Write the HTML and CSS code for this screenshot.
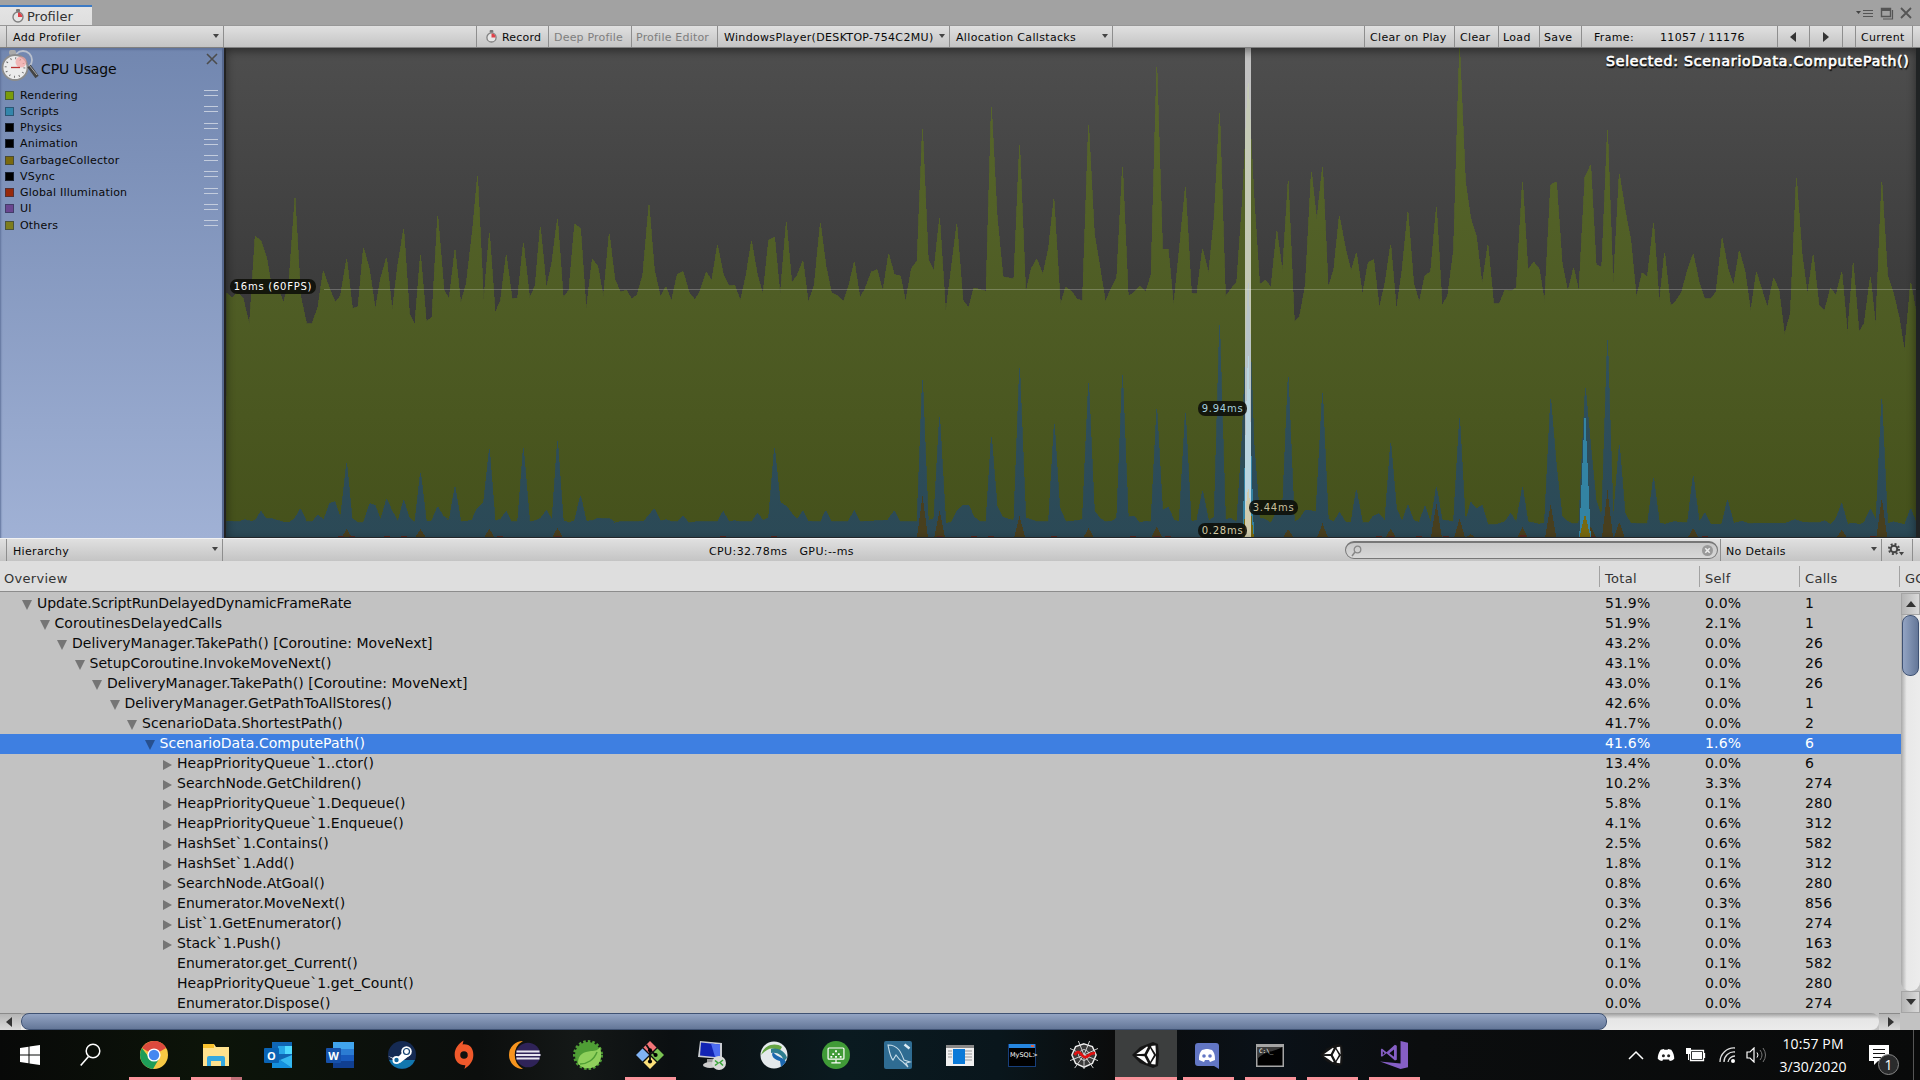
FILE: index.html
```html
<!DOCTYPE html>
<html lang="en">
<head>
<meta charset="utf-8">
<title>Profiler</title>
<link rel="stylesheet" href="styles.css">
</head>
<body>
<svg width="0" height="0" class="defs">
  <defs>
    <symbol id="watch" viewBox="0 0 12 14"><rect x="4" y="0" width="4" height="3" rx="1" fill="#777"/><circle cx="6" cy="8" r="5" fill="#e6e6e6" stroke="#808080" stroke-width="1.4"/><path d="M6 8V3.6A4.4 4.4 0 0 1 10.4 8z" fill="#e0424a"/></symbol>
    <symbol id="unity" viewBox="0 0 28 28"><path d="M0 14 8 6 21 1l5 2 1 11-1 11-5 2-13-5z" fill="#151515"/><path d="M4 13.300 15 5.500l1 .5-3.500 6.800zM4 14.800l8.500.4L16 22l-1 .6zM18.500 5l5-.5.500 9-5.500-8.500zM14 14l3.800-7.500L22 14l-4.200 7.500zM24 14.500l-.5 9-5-.5z" fill="#fff"/><path d="M4 14h10M14 14l5-9.500M14 14l5 9.500" stroke="#151515" stroke-width="1.500"/></symbol>
    <symbol id="discord" viewBox="0 0 24 18"><path d="M5 2 9 1l1 1h4l1-1 4 1c3 4 4 8 4 12-2 2-4 3-6 3l-1-2H8l-1 2c-2 0-4-1-6-3 0-4 1-8 4-12z" fill="#fff"/></symbol>
  </defs>
</svg>

<div class="titlebar">
  <div class="tab"><svg class="tab-icon"><use href="#watch"/></svg><span>Profiler</span></div>
  <svg class="window-buttons" viewBox="0 0 60 16"><path d="M0 6h5l-2.500 3z" fill="#444"/><path d="M7 5.500h10M7 8.500h10M7 11.500h10" stroke="#555" fill="none"/><path d="M25.500 3.500h9v8h-9z" fill="none" stroke="#555" stroke-width="1.4"/><path d="M25 3h10v3H25z" fill="#555"/><path d="M27 14h9.500V5" fill="none" stroke="#555" stroke-width="1.2"/><path d="M45 3l10 10M55 3 45 13" stroke="#555" stroke-width="1.8"/></svg>
</div>

<div class="toolbar top-tools">
  <div class="tool w-lead"></div>
  <div class="tool w-add">Add Profiler<i class="caret"></i></div>
  <div class="tool w-gap1"></div>
  <div class="tool w-record"><svg class="rec-icon"><use href="#watch"/></svg><span>Record</span></div>
  <div class="tool w-deep off">Deep Profile</div>
  <div class="tool w-editor off">Profile Editor</div>
  <div class="tool w-player">WindowsPlayer(DESKTOP-754C2MU)<i class="caret"></i></div>
  <div class="tool w-alloc">Allocation Callstacks<i class="caret"></i></div>
  <div class="tool w-gap2"></div>
  <div class="tool w-cop">Clear on Play</div>
  <div class="tool w-clear">Clear</div>
  <div class="tool w-load">Load</div>
  <div class="tool w-save">Save</div>
  <div class="tool w-frame"><span>Frame:</span><span>11057 / 11176</span></div>
  <div class="tool w-prev"><svg width="6" height="10"><path d="M6 0v10L0 5z" fill="#333"/></svg></div>
  <div class="tool w-next"><svg width="6" height="10"><path d="M0 0v10l6-5z" fill="#333"/></svg></div>
  <div class="tool w-gap3"></div>
  <div class="tool w-current">Current</div>
</div>

<div class="profile">
  <div class="legend">
    <div class="legend-head">
      <svg class="cpu-icon" viewBox="0 0 38 34"><circle cx="22" cy="11" r="9" fill="none" stroke="#b9c0cd" stroke-width="1.800"/><rect x="8" y="1" width="7" height="5" rx="2" fill="#aaa"/><circle cx="14" cy="18.500" r="12.500" fill="#ececec" stroke="#8c8c8c" stroke-width="1.800"/><circle cx="14" cy="18.500" r="9.300" fill="none" stroke="#666" stroke-dasharray=".9 3.970" stroke-width="2"/><circle cx="20" cy="13" r="5.500" fill="#f3a3a3" opacity=".7"/><path d="M10 18.500h9" stroke="#b33" stroke-width="1.300"/><path d="M28 17 36 28" stroke="#444" stroke-width="4"/><path d="M28 16 36 26" stroke="#aaa"/></svg>
      <span>CPU Usage</span>
      <svg class="close" viewBox="0 0 12 12"><path d="M1 1l10 10M11 1 1 11" stroke="#4c4c4c" stroke-width="1.600"/></svg>
    </div>
    <div class="legend-list">
      <div class="key"><i class="sw c-render"></i>Rendering<b></b></div>
      <div class="key"><i class="sw c-script"></i>Scripts<b></b></div>
      <div class="key"><i class="sw c-none"></i>Physics<b></b></div>
      <div class="key"><i class="sw c-none"></i>Animation<b></b></div>
      <div class="key"><i class="sw c-gc"></i>GarbageCollector<b></b></div>
      <div class="key"><i class="sw c-none"></i>VSync<b></b></div>
      <div class="key"><i class="sw c-gi"></i>Global Illumination<b></b></div>
      <div class="key"><i class="sw c-ui"></i>UI<b></b></div>
      <div class="key"><i class="sw c-other"></i>Others<b></b></div>
    </div>
  </div>
  <div class="chart">
    <svg class="plot" viewBox="224 48 1696 490" preserveAspectRatio="none" shape-rendering="crispEdges">
      <defs>
        <linearGradient id="gGreen" gradientUnits="userSpaceOnUse" x1="0" y1="48" x2="0" y2="538"><stop offset="0" stop-color="#59682c"/><stop offset=".5" stop-color="#4f5d25"/><stop offset="1" stop-color="#45511b"/></linearGradient>
        <linearGradient id="gBlue" gradientUnits="userSpaceOnUse" x1="0" y1="300" x2="0" y2="538"><stop offset="0" stop-color="#31535f"/><stop offset="1" stop-color="#2b4956"/></linearGradient>
      </defs>
      <polygon id="rendering" fill="url(#gGreen)" stroke="url(#gGreen)" stroke-width=".8"/>
      <polygon id="scripts" fill="url(#gBlue)" stroke="url(#gBlue)" stroke-width=".8"/>
      <path id="garbage" fill="#483f1e"/>
      <path id="illumination" fill="#5a2a22"/>
      <path id="pathScripts" fill="#3383a3"/>
      <path id="pathGarbage" fill="#77690f"/>
      <path d="M324 289.500H1919" stroke="#fff" stroke-opacity=".23"/>
      <rect x="1245" y="48" width="6" height="490" fill="#fff" fill-opacity=".66"/>
    </svg>
    <div class="selected">Selected: ScenarioData.ComputePath()</div>
    <div class="pill p-fps">16ms (60FPS)</div>
    <div class="pill p-a">9.94ms</div>
    <div class="pill p-b">3.44ms</div>
    <div class="pill p-c">0.28ms</div>
  </div>
</div>

<div class="toolbar view-tools">
  <div class="tool w-lead"></div>
  <div class="tool w-hier">Hierarchy<i class="caret"></i></div>
  <div class="stats"><span>CPU:32.78ms</span><span>GPU:--ms</span></div>
  <div class="search"><svg width="12" height="12" viewBox="0 0 12 12"><circle cx="6.500" cy="4.500" r="3.300" fill="none" stroke="#888" stroke-width="1.300"/><path d="M4 7l-3 4" stroke="#888" stroke-width="1.500"/></svg><svg width="11" height="11" viewBox="0 0 11 11"><circle cx="5.500" cy="5.500" r="5.500" fill="#999"/><path d="M3.300 3.300l4.400 4.400M7.700 3.300 3.300 7.700" stroke="#eee" stroke-width="1.500"/></svg></div>
  <div class="tool w-details">No Details<i class="caret"></i></div>
  <div class="tool w-gear"><svg width="17" height="14" viewBox="0 0 17 14"><circle cx="6" cy="6" r="3.300" fill="none" stroke="#444" stroke-width="2"/><circle cx="6" cy="6" r="5" fill="none" stroke="#444" stroke-width="2" stroke-dasharray="1.960 1.960"/><path d="M11 9h5l-2.500 3.500z" fill="#444"/></svg></div>
</div>

<div class="table">
  <div class="thead"><span class="name">Overview</span><span>Total</span><span>Self</span><span>Calls</span><span class="gc">GC</span></div>
  <div class="tbody">
    <div class="rows" id="rows"></div>
    <div class="vbar"><div class="arrow up"></div><div class="vtrack"><div class="vthumb"></div></div><div class="arrow down"></div></div>
  </div>
  <div class="hbar"><div class="harrow left"></div><div class="htrack"><div class="hthumb"></div></div><div class="harrow right"></div><div class="corner"></div></div>
</div>

<div class="taskbar">
  <div class="slot start"><svg width="20" height="20" viewBox="0 0 20 20"><path d="M0 3l8.500-1.200v7.700H0zM9.500 1.600 20 0v9.500H9.500zM0 10.500h8.500v7.700L0 17zM9.500 10.500H20V20L9.500 18.400z" fill="#fff"/></svg></div>
  <div class="slot find"><svg width="21" height="24" viewBox="0 0 21 24"><circle cx="13" cy="8" r="6.800" fill="none" stroke="#fff" stroke-width="1.500"/><path d="M8.500 13.500 .7 22.500" stroke="#fff" stroke-width="1.600"/></svg></div>
  <div class="slot open"><svg viewBox="0 0 28 28"><circle cx="14" cy="14" r="14" fill="#f7c844"/><path d="M14 14 1.900 7A14 14 0 0 1 26.100 7z" fill="#dc4a3d"/><path d="M14 0A14 14 0 0 1 26.100 7H14z" fill="#dc4a3d"/><path d="M1.900 7A14 14 0 0 0 13 28l6.500-11L8 15z" fill="#1e9d58"/><circle cx="14" cy="14" r="6.600" fill="#fff"/><circle cx="14" cy="14" r="5.200" fill="#4688f1"/></svg></div>
  <div class="slot open multi"><svg viewBox="0 0 28 28"><path d="M1 3h11l2 3h13v19H1z" fill="#ffe28e"/><path d="M1 3h11v4H1z" fill="#f9c22e"/><path d="M5 25v-8q0-2 2-2h14q2 0 2 2v8h-4v-5H9v5z" fill="#35a8e0"/></svg></div>
  <div class="slot"><svg viewBox="0 0 28 28"><path d="M8 1h20v26H8z" fill="#1066b5"/><path d="M14 5h14v8H14z" fill="#28a8ea"/><path d="M21 5h7v8h-7z" fill="#50d9ff"/><path d="M8 14l20 13H8z" fill="#1490df"/><path d="M28 14v13L16 19z" fill="#35b8f1"/><rect y="7" width="15" height="15" rx="1" fill="#0a63b4"/><text x="7.500" y="18.500" class="badge-letter">O</text></svg></div>
  <div class="slot"><svg viewBox="0 0 28 28"><path d="M7 1h21v7H7z" fill="#41a5ee"/><path d="M7 8h21v7H7z" fill="#2b7cd3"/><path d="M7 14h21v7H7z" fill="#185abd"/><path d="M7 20h21v7H7z" fill="#103f91"/><rect y="7" width="15" height="15" rx="1" fill="#1651aa"/><text x="7.500" y="18.500" class="badge-letter">W</text></svg></div>
  <div class="slot"><svg viewBox="0 0 28 28"><circle cx="14" cy="14" r="14" fill="#152a52"/><path d="M1 19a14 14 0 0 0 26 0z" fill="#1277ae"/><path d="M0 15l8 3 6-6 7 3-9 7z" fill="#fff"/><circle cx="8.500" cy="19" r="4" fill="#fff"/><circle cx="8.500" cy="19" r="2.200" fill="#15659a"/><circle cx="18.500" cy="10.500" r="5.300" fill="#fff"/><circle cx="18.500" cy="10.500" r="3" fill="#fff" stroke="#123f70" stroke-width="1.200"/></svg></div>
  <div class="slot"><svg viewBox="0 0 28 30"><path d="M14 3.500c7 0 10 5 10 11.500 0 7-4 11-9.500 15l1-4C8 26 4 21 4 14.500 4 8 8 3 13.500-.5l-1 4.200z" fill="#f0592b"/><circle cx="14" cy="15" r="4" fill="#10110f"/></svg></div>
  <div class="slot"><svg viewBox="0 0 28 28"><path d="M11 0A14 14 0 0 0 11 28 16 16 0 0 1 11 0z" fill="#f7941e"/><circle cx="16" cy="14" r="12.300" fill="#2f2358"/><path d="M4.500 10.500h23M4 14h24.500M4.500 17.500h23" stroke="#e8e6f0" stroke-width="1.800"/></svg></div>
  <div class="slot"><svg viewBox="0 0 28 28"><circle cx="14" cy="14" r="13.500" fill="none" stroke="#4f9e35" stroke-width="3" stroke-dasharray="2.500 2"/><circle cx="14" cy="14" r="13" fill="#4f9e35"/><path d="M26 6c3 11 0 19-9 21-6 1-11-1-13-5 0-9 6-11 13-12 5 0 7-1 9-4z" fill="#8fd05c"/><path d="M6 23c7 0 14-4 17-12" stroke="#4f9e35" stroke-width="1.500" fill="none"/></svg></div>
  <div class="slot open"><svg viewBox="0 0 30 30"><path d="M15 0l7 7-7 7-7-7z" fill="#f37579"/><path d="M7 8l7 7-7 7-7-7z" fill="#80b3f5"/><path d="M23 8l7 7-7 7-7-7z" fill="#7bc353"/><path d="M15 16l7 7-7 7-7-7z" fill="#fce07a"/><path d="M11 4l4 6v12M15 10l6 5" stroke="#111" stroke-width="2" fill="none"/><circle cx="15" cy="10" r="2.200"/><circle cx="21" cy="15" r="2.200"/><circle cx="15" cy="22" r="2.200"/></svg></div>
  <div class="slot"><svg viewBox="0 0 28 28"><path d="M2 0l22 2v16L0 16z" fill="#c9ccd2"/><path d="M3 1.500l19 2v13L2 14.500z" fill="#1224b4"/><path d="M13 2.500l9 1v13l-5-.5z" fill="#4d6df0"/><path d="M9 18h7v5H9z" fill="#999"/><ellipse cx="12" cy="24" rx="7" ry="3" fill="#ccc"/><circle cx="21" cy="22" r="7" fill="#d8dad7"/><path d="M17 19.500l3 2.500-3 2.500M25 19l-3 2.500 3 3" stroke="#3aa53a" stroke-width="1.600" fill="none"/></svg></div>
  <div class="slot"><svg viewBox="0 0 28 28"><circle cx="14" cy="14" r="13.500" fill="#e5eaec"/><path d="M1 14C4 4 15 1 22 6l-3 5C14 5 7 7 1 14z" fill="#66a544"/><path d="M11 8c8-2 15 4 16 9l-3 3c-2-6-6-9-13-8z" fill="#2e7d8f"/><path d="M13 11c-3 4 2 8 7 9l1 6 5-5c-2-5-8-4-13-10z" fill="#1c68b0"/></svg></div>
  <div class="slot"><svg viewBox="0 0 30 30"><circle cx="15" cy="15" r="15" fill="#409b37"/><rect x="6.500" y="7.500" width="17" height="12" rx="1" fill="none" stroke="#fff" stroke-width="1.300"/><path d="M15 20v3M10 23.500h10" stroke="#fff" stroke-width="1.300"/><path d="M14 10h2v2h-2zM11 13h2v2h-2zM17 13h2v2h-2zM9 16h2v2H9zM14 16h2v2h-2zM19 16h2v2h-2z" fill="#fff"/></svg></div>
  <div class="slot"><svg viewBox="0 0 28 28"><rect width="28" height="28" rx="2" fill="#2f6c92"/><path d="M4 4c10 0 13 7 16 15l6 2-4 1 2 4-5-5c-2-1-5-4-7-7l-3 5C6 16 5 9 4 4z" fill="none" stroke="#c7dde9" stroke-width="1.100"/><path d="M20.500 3.500l5 4" stroke="#dcecf5" stroke-width="2.500"/></svg></div>
  <div class="slot"><svg viewBox="0 0 28 28"><path d="M0 4h28v21H0z" fill="#f0f0f0"/><path d="M0 4h28v3H0z" fill="#888"/><path d="M2 10h4M2 13h4M2 16h4M19 10h7M19 13h7M19 16h7M19 19h7" stroke="#999"/><path d="M7 8h12v15H7z" fill="#0b7ad8"/></svg></div>
  <div class="slot"><svg viewBox="0 0 28 28"><path d="M0 3h28v23H0z" fill="#173f7c"/><path d="M1 3h26v4H1z" fill="#2586e0"/><path d="M1 7h26v18H1z" fill="#000"/><path d="M23 4h3v2h-3z" fill="#e06040"/><text x="2" y="15.500" class="mysql-text">MySQL&gt;</text></svg></div>
  <div class="slot"><svg viewBox="0 0 30 30"><path d="M15 3l9 3 4 9-4 9-9 4-9-4-4-9 4-9z" fill="#3a3a3a" stroke="#eee" stroke-width="1.500"/><path d="M15 9l4 2 2 4-2 4-4 2-4-2-2-4 2-4z" fill="none" stroke="#ccc"/><path d="M9 0l6 15L21 0M0 8l15 7L30 8M0 21l15-6 15 6M5 29l10-14 10 14M15 15v15" stroke="#ddd" stroke-width="1" fill="none"/><path d="M5 15c4-7 7 0 10 2 4 2 5-5 12-4" stroke="#e01010" stroke-width="3" fill="none"/></svg></div>
  <div class="slot active"><svg><use href="#unity"/></svg></div>
  <div class="slot open"><svg viewBox="0 0 28 28"><path d="M4 2h18q3 0 3 3v23l-5-3H4q-3 0-3-3V5q0-3 3-3z" fill="#6276c4"/><path d="M8 9l4-1h2l4 1c3 3 3 7 3 10l-5 2-1-2h-4l-1 2-5-2c0-3 0-7 3-10z" fill="#fff"/><circle cx="10" cy="15" r="1.800" fill="#6276c4"/><circle cx="16" cy="15" r="1.800" fill="#6276c4"/></svg></div>
  <div class="slot open"><svg viewBox="0 0 28 28"><path d="M0 3h28v23H0z" fill="#a5a5a5"/><path d="M1.500 6h25v18.500h-25z"/><path d="M1.500 6h25C18 11 8 10 1.500 18z" fill="#3b3b3b"/><text x="3" y="12" class="cmd-text">C:\_</text></svg></div>
  <div class="slot open"><svg class="small"><use href="#unity" width="24" height="24"/></svg></div>
  <div class="slot open"><svg viewBox="0 0 30 30"><path d="M22 0l8 2v26l-8 2L0 22l22 2z" fill="#865fc5"/><path d="M2 8l5 4 9-8 2 1v15l-2 1-9-8-5 4-1-1V9zM3 11v4l2-2zM15 9l-5 4 5 4z" fill="#865fc5" fill-rule="evenodd"/></svg></div>
  <div class="tray">
    <svg class="t-up" viewBox="0 0 16 10"><path d="M1 9l7-7 7 7" stroke="#fff" stroke-width="1.500" fill="none"/></svg>
    <svg class="t-disc" viewBox="0 0 24 18"><use href="#discord" width="24" height="18"/><circle cx="8.500" cy="10" r="2" fill="#222"/><circle cx="15.500" cy="10" r="2" fill="#222"/></svg>
    <svg class="t-bat" viewBox="0 0 20 14"><path d="M4.500 2.500h13v10h-13zM18.500 5v5" stroke="#fff" fill="none" stroke-width="1.300"/><path d="M6 4h10v7H6z" fill="#fff"/><path d="M0 0h5v6H3v6H2V6H0z" fill="#fff"/></svg>
    <svg class="t-wifi" viewBox="0 0 17 16"><path d="M1 15A14 14 0 0 1 16 1M5 15A10 10 0 0 1 16 5M9 15A7 7 0 0 1 16 9" stroke="#ddd" fill="none" stroke-width="1.300"/><circle cx="14" cy="14" r="2" fill="#fff"/></svg>
    <svg class="t-vol" viewBox="0 0 20 16"><path d="M1 5h3l4-4v14l-4-4H1z" stroke="#fff" fill="none" stroke-width="1.200"/><path d="M11 5.500q2 2.500 0 5" stroke="#fff" fill="none"/><path d="M14 3q4 5 0 10M17 1q5 7 0 14" stroke="#777" fill="none"/></svg>
    <div class="clock"><span>10:57 PM</span><span>3/30/2020</span></div>
    <div class="note"><svg width="20" height="20" viewBox="0 0 20 20"><path d="M0 0h20v16H9l-4 4v-4H0z" fill="#fff"/><path d="M4 4.500h12M4 8.500h12M4 12.500h8" stroke="#111" stroke-width="1.200"/></svg><span class="count">1</span></div>
    <div class="desk"></div>
  </div>
</div>
<script src="chart.js"></script>
</body>
</html>
```
FILE: styles.css
```css
* { box-sizing: border-box; }
body { margin: 0; width: 1920px; height: 1080px; overflow: hidden; display: flex; flex-direction: column; background: #c2c2c2; font-family: "DejaVu Sans", sans-serif; font-size: 11px; color: #090909; }
.defs { position: absolute; }
svg { display: block; flex: none; }

.titlebar { height: 26px; flex: none; background: #a2a2a2; display: flex; justify-content: space-between; align-items: flex-end; border-bottom: 1px solid #979797; }
.tab { width: 92px; height: 20px; border-top: 2px solid #3c7ac4; background: linear-gradient(#e4e4e4, #dedede); display: flex; align-items: center; padding-left: 12px; gap: 3px; font-size: 13px; color: #333; }
.tab-icon { width: 12px; height: 14px; }
.window-buttons { width: 60px; height: 16px; margin: 0 4px 4px 0; }

.toolbar { display: flex; flex: none; background: linear-gradient(#e0e0e0, #c4c4c4); letter-spacing: .33px; }
.top-tools { height: 22px; border-bottom: 1px solid #808080; }
.view-tools { height: 23px; border-top: 1px solid #f2f2f2; }
.tool { display: flex; align-items: center; border-right: 1px solid #8e8e8e; white-space: nowrap; padding: 2px 0 0 6px; flex: none; }
.off { color: #7e7e7e; }
.caret { width: 0; height: 0; border: 3px solid transparent; border-top: 4px solid #444; border-bottom: 0; margin: 0 4px 4px auto; }
.w-lead { width: 7px; }
.w-add { width: 217px; }
.w-gap1 { width: 253px; }
.w-record { width: 72px; padding-left: 9px; gap: 5px; letter-spacing: .2px; }
.rec-icon { width: 11px; height: 13px; margin-bottom: 2px; }
.w-deep { width: 83px; padding-left: 5px; letter-spacing: .2px; }
.w-editor { width: 86px; padding-left: 4px; letter-spacing: .2px; }
.w-player { width: 232px; }
.w-alloc { width: 163px; }
.w-gap2 { width: 252px; }
.w-cop { width: 90px; padding-left: 5px; }
.w-clear { width: 44px; padding-left: 5px; }
.w-load { width: 41px; padding-left: 4px; }
.w-save { width: 42px; padding-left: 4px; }
.w-frame { width: 196px; padding-left: 12px; gap: 26px; }
.w-prev { width: 32px; padding: 0 0 0 12px; }
.w-next { width: 33px; padding: 0 0 0 13px; }
.w-gap3 { width: 13px; }
.w-current { width: 57px; padding-left: 5px; }

.profile { height: 490px; flex: none; display: flex; }
.legend { width: 224px; background: linear-gradient(#7287b0, #a0b1d5); border-right: 2px solid #56688e; box-shadow: inset 1px 2px 2px #5f739b; }
.legend-head { height: 39px; display: flex; align-items: flex-start; font-size: 14px; letter-spacing: -.1px; }
.cpu-icon { width: 38px; height: 34px; margin: 1px 0 0 1px; }
.legend-head span { margin: 13px 0 0 2px; }
.close { width: 12px; height: 12px; margin: 5px 4px 0 auto; }
.legend-list { display: grid; grid-template-rows: repeat(9, 16.25px); letter-spacing: .2px; }
.key { display: flex; align-items: center; padding: 0 4px 0 5px; }
.sw { width: 9px; height: 9px; border: 1px solid rgba(40, 55, 80, .6); margin-right: 6px; }
.key b { width: 14px; height: 6px; border-top: 1px solid #c3ccdd; border-bottom: 1px solid #c3ccdd; margin-left: auto; margin-bottom: 4px; }
.c-render { background: #7a9c0a; }
.c-script { background: #3386ab; }
.c-none { background: #000; }
.c-gc { background: #7a690d; }
.c-gi { background: #97290b; }
.c-ui { background: #6a4690; }
.c-other { background: #7d7d1d; }

.chart { flex: 1; position: relative; background: linear-gradient(#4e4e4e, #363636 65%); overflow: hidden; }
.plot { width: 1696px; height: 490px; }
.chart::after { content: ""; position: absolute; inset: 0; border-right: 4px solid #202324; border-bottom: 1px solid #22272a; border-left: 2px solid #222; box-shadow: inset 0 3px 10px rgba(0, 0, 0, .45); }
.selected { position: absolute; right: 9px; top: 5px; width: 305px; color: #fff; font-size: 14px; letter-spacing: .82px; white-space: nowrap; -webkit-text-stroke: .7px #fff; text-shadow: 1px 2px 1px #000, 0 1px 2px #000; z-index: 2; }
.pill { position: absolute; z-index: 2; height: 15px; border-radius: 7px; background: rgba(12, 14, 8, .88); font-size: 10px; line-height: 15px; letter-spacing: .75px; text-align: center; white-space: nowrap; }
.p-fps { left: 6px; top: 231px; width: 86px; color: #fff; }
.p-a { left: 974px; top: 353px; width: 49px; color: #a6cfdf; }
.p-b { left: 1025px; top: 452px; width: 49px; color: #c8bf9b; }
.p-c { left: 974px; top: 475px; width: 49px; color: #d4cba5; }

.w-hier { width: 216px; }
.stats { width: 1122px; display: flex; gap: 12px; align-items: center; padding: 2px 0 0 486px; flex: none; letter-spacing: .4px; }
.search { width: 373px; height: 18px; margin: 2px 2px 0 0; border: 1px solid #777; border-top-width: 2px; border-radius: 9px; background: linear-gradient(#c8c8c8, #d8d8d8); display: flex; align-items: center; justify-content: space-between; padding: 0 4px 0 5px; flex: none; }
.w-details { width: 162px; border-left: 1px solid #8e8e8e; padding-left: 5px; }
.w-gear { width: 31px; padding-top: 0; }

.table { flex: none; height: 469px; display: flex; flex-direction: column; font-size: 14px; }
.thead { height: 31px; flex: none; background: #dedede; border-bottom: 1px solid #8c8c8c; display: grid; grid-template-columns: 1599px 100px 100px 100px 21px; color: #333; padding: 5px 0 4px; overflow: hidden; font-size: 13px; letter-spacing: .3px; }
.thead span { border-left: 1px solid #a2a2a2; padding-left: 5px; height: 21px; line-height: 26px; }
.thead .name { border: 0; padding-left: 4px; }
.thead .gc { overflow: hidden; white-space: nowrap; }
.tbody { display: flex; height: 421px; flex: none; overflow: hidden; }
.rows { width: 1901px; padding-top: 2px; overflow: hidden; }
.row { height: 20px; display: grid; grid-template-columns: 1599px 100px 100px 102px; line-height: 18px; white-space: pre; letter-spacing: .2px; }
.row span { padding-left: 6px; }
.row .fn { display: flex; letter-spacing: .05px; padding-left: calc(22px + var(--depth) * 17.5px); }
.row:first-child .fn { letter-spacing: -.08px; }
.row svg { width: 10px; height: 10px; margin: 6px 5px 0 0; fill: #757575; }
.row.on { background: #3e7fe1; color: #fff; }
.row.on svg { fill: #27508f; }
.vbar { width: 19px; margin-top: 1px; display: flex; flex-direction: column; }
.arrow { height: 22px; background: linear-gradient(90deg, #b5b5b5, #dadada); border: 1px solid #a5a5a5; display: flex; justify-content: center; align-items: center; }
.arrow::before { content: ""; border: 5px solid transparent; }
.up::before { border-bottom: 6px solid #333; border-top: 0; }
.down::before { border-top: 6px solid #333; border-bottom: 0; }
.vtrack { flex: 1; background: linear-gradient(90deg, #a8a8a8, #e8e8e8 30%, #ececec); border-radius: 0 0 9px 9px; padding: 0 1px; }
.vthumb { height: 61px; border: 1px solid #3f5273; border-radius: 8px; background: linear-gradient(90deg, #93a4c3, #647798); }
.hbar { height: 17px; display: flex; }
.harrow { width: 21px; background: linear-gradient(#b5b5b5, #dadada); border-top: 1px solid #8a8a8a; display: flex; align-items: center; justify-content: center; flex: none; }
.harrow::before { content: ""; border: 5px solid transparent; }
.left::before { border-right: 6px solid #333; border-left: 0; margin-right: 4px; }
.right::before { border-left: 6px solid #333; border-right: 0; margin-left: 3px; }
.htrack { width: 1858px; background: linear-gradient(#999, #e6e6e6 35%, #ebebeb); border-radius: 0 8px 8px 0; flex: none; }
.hthumb { width: 1586px; height: 17px; border: 1px solid #3f5273; border-radius: 8px; background: linear-gradient(#93a4c3, #647798); }
.corner { flex: 1; background: #c2c2c2; }

.taskbar { height: 50px; flex: none; display: flex; background: linear-gradient(90deg, #080908, #0c1409 11%, #0c0e0d 25%, #141817 30%, #0b0f11 35%, #0a1a20 44%, #09161c 52%, #0b0c0c 58%, #0a1118 66%, #0b0d0e 74%, #090a0a); }
.slot { width: 62px; display: flex; align-items: center; justify-content: center; flex: none; position: relative; }
.slot svg { width: 28px; height: 28px; overflow: visible; }
.slot svg.small { width: 24px; height: 24px; }
.start { width: 60px; }
.start svg { width: 20px; height: 20px; }
.find { width: 61px; margin-right: 2px; }
.find svg { width: 21px; height: 24px; }
.open::after, .active::after { content: ""; position: absolute; left: 6px; right: 5px; bottom: 0; height: 3px; background: #fa939b; }
.multi::after { background: linear-gradient(90deg, #fa939b 40px, #c06f77 40px); }
.active { background: #3c3e3e; }
.active::after { left: 0; right: 0; }
.badge-letter { fill: #fff; font: bold 11px "Open Sans", sans-serif; text-anchor: middle; }
.mysql-text { fill: #fff; font: 6.5px "DejaVu Sans", sans-serif; }
.cmd-text { fill: #fff; font: 6px "DejaVu Sans Mono", monospace; }
.tray { margin-left: auto; display: flex; align-items: center; }
.t-up { width: 16px; height: 10px; margin-right: 13px; }
.t-disc { width: 18px; height: 14px; margin-right: 11px; }
.t-bat { width: 20px; height: 14px; margin-right: 13px; }
.t-wifi { width: 17px; height: 16px; margin-right: 10px; }
.t-vol { width: 20px; height: 16px; margin-right: 11px; }
.clock { width: 72px; color: #fff; font-family: "Open Sans", sans-serif; font-size: 14px; line-height: 23px; letter-spacing: .1px; display: flex; flex-direction: column; align-items: center; }
.note { width: 44px; margin-left: 20px; position: relative; height: 50px; padding-top: 15px; }
.count { position: absolute; left: 9px; top: 24px; width: 21px; height: 21px; border-radius: 50%; background: #2a2b2c; border: 1px solid #888; color: #fff; font: 14px/19px "Open Sans", sans-serif; text-align: center; }
.desk { width: 7px; height: 50px; border-left: 1px solid #555; }
```
FILE: chart.js
```js
// Samples come in three blocks, each with its own origin and horizontal scale.
const blocks = [
  { x: 220, y: 150, sx: 2.6133, sy: 3 },
  { x: 800, y: 50, sx: 2.8, sy: 3 },
  { x: 1360, y: 50, sx: 2.8, sy: 3 }
];
const place = (b, x, y) => [(b.x + x / b.sx).toFixed(1), (b.y + y / b.sy).toFixed(1)];

const rendering = [
  "18,430 33,444 45,425 60,445 77,525 92,258 107,273 122,325 133,400 152,415 166,458 180,400 196,145 211,440 226,521 241,521 256,470 270,363 286,415 301,457 315,437 331,327 346,476 361,470 375,294 390,355 406,480 420,385 435,323 450,484 465,345 480,237 495,490 509,525 524,315 539,516 554,500 569,197 585,420 599,447 614,299 629,461 644,400 660,240 673,78 689,458 704,248 719,488 733,453 748,315 763,446 778,444 793,279 809,446 824,405 837,230 853,416 867,340 882,206 897,443 912,420 927,221 942,236 957,483 973,327 987,348 1002,444 1017,251 1032,390 1047,426 1062,421 1076,447 1090,435 1105,375 1121,164 1135,360 1151,440 1165,410 1180,453 1195,373 1210,365 1226,427 1241,450 1255,423 1271,365 1285,394 1300,285 1315,372 1330,408 1345,406 1360,453 1375,375 1389,273 1404,375 1419,435 1434,270 1449,261 1464,440 1480,216 1494,400 1509,375",
  "8,632 23,758 40,705 57,518 72,645 88,728 103,736 122,754 136,710 152,636 168,745 184,712 200,666 216,659 232,725 248,612 264,674 281,677 296,756 312,656 328,632 343,238 359,628 375,664 391,505 408,790 423,660 439,523 456,750 472,774 487,714 504,719 521,724 536,172 552,500 568,680 584,684 599,688 615,284 632,730 648,655 663,627 680,674 696,595 711,448 729,766 744,711 760,724 776,747 791,753 808,225 824,550 840,655 855,756 871,715 887,683 903,350 919,738 935,728 951,708 968,726 983,675 999,50 1015,597 1031,598 1046,770 1062,600 1079,412 1096,729 1111,733 1127,597 1144,672 1160,500 1175,188 1191,740 1208,715 1223,696 1239,450 1255,100 1271,440 1287,704 1303,690 1319,712 1335,542 1351,668 1367,394 1384,816 1399,800 1415,705 1432,365 1447,515 1463,350 1479,714 1495,658 1510,498 1527,595 1543,664 1558,608",
  "7,735 23,638 38,629 54,775 70,700 86,584 102,780 118,660 134,485 150,700 166,757 182,677 198,665 214,472 230,768 246,735 262,600 279,-8 295,395 310,505 326,560 342,706 358,585 374,761 390,761 406,720 422,723 438,714 455,395 470,660 486,636 502,657 517,760 534,405 550,395 566,640 582,726 598,654 613,725 630,382 646,345 661,645 677,651 693,240 709,715 726,371 742,480 758,570 774,745 790,669 805,680 822,520 838,762 853,608 869,768 885,752 901,725 917,660 933,612 950,700 965,746 982,747 997,725 1014,565 1030,655 1046,706 1062,602 1078,665 1094,786 1110,666 1126,722 1141,773 1158,683 1173,720 1189,856 1205,790 1222,385 1238,615 1253,735 1269,614 1285,765 1301,783 1317,715 1333,736 1349,665 1365,855 1381,638 1397,847 1412,820 1429,680 1444,832 1461,395 1477,675 1493,727 1509,800 1525,904 1542,698 1558,792"
];
const scripts = [
  "18,1114 50,1115 64,1109 77,1114 92,1112 107,1084 121,1106 135,1106 165,1116 182,1116 195,1106 210,1076 226,1115 241,1115 256,1094 271,1110 287,1060 300,1055 315,1105 331,940 345,1105 361,1118 375,1119 391,1061 405,1066 420,1110 435,1048 450,1083 465,1115 480,1050 494,1102 509,1120 524,968 539,1114 553,1113 569,1070 584,1100 599,1112 614,1010 629,1115 644,1114 658,1110 673,1075 689,1057 704,898 719,1113 733,1108 748,1084 762,1115 778,1116 793,895 809,1116 824,1112 838,1104 853,1081 868,1110 882,874 897,1112 912,1118 927,1112 942,1037 957,1114 973,1112 986,1105 1018,1107 1032,1119 1045,1115 1090,1115 1108,1113 1135,1076 1151,1114 1166,1109 1180,1115 1197,1115 1210,1097 1225,1119 1245,1115 1300,1115 1315,1084 1330,1115 1344,1112 1360,1115 1390,1115 1405,1089 1419,1112 1434,1102 1449,895 1464,1058 1480,1068 1494,1090 1509,1107",
  "8,1382 23,1414 57,1416 72,1382 88,1415 135,1415 152,1381 168,1415 245,1411 264,1382 280,1415 328,1416 343,990 359,1412 375,1406 391,1100 408,1420 424,1418 440,1382 456,1366 472,1365 487,1400 504,1415 521,1415 536,1160 552,1370 568,1402 599,1412 615,955 632,1404 664,1415 696,1415 712,1123 727,1372 744,1415 776,1412 791,1408 808,999 824,1382 840,1405 855,1415 871,1414 887,1405 903,976 919,1402 935,1398 951,1418 968,1414 983,1415 999,1078 1015,1380 1031,1370 1047,1410 1062,1415 1079,1090 1095,1414 1111,1412 1127,1323 1144,1413 1160,1400 1175,825 1191,1408 1208,1406 1223,1418 1239,1150 1255,700 1271,1180 1287,1405 1303,1408 1319,1420 1335,1382 1351,1380 1367,982 1384,1416 1399,1407 1415,1380 1445,1385 1463,1030 1479,1408 1495,1415 1511,1387 1527,1416 1543,1416 1558,1320",
  "7,1418 23,1419 38,1397 54,1391 70,1413 86,1178 102,1375 118,1415 134,1365 150,1412 166,1417 182,1367 198,1418 214,1311 230,1410 262,1415 279,1105 295,1418 310,1356 326,1376 342,1366 358,1424 380,1424 405,1416 422,1390 438,1418 455,1311 470,1415 502,1423 517,1418 534,1048 550,1250 566,1400 582,1415 597,1422 613,1420 631,1015 646,1190 661,1352 677,1403 693,870 709,1413 726,1185 742,1390 758,1420 805,1422 822,1283 838,1418 853,1423 880,1415 917,1419 933,1279 950,1418 965,1388 982,1422 1013,1422 1029,1350 1046,1420 1070,1414 1090,1422 1110,1419 1190,1420 1218,1409 1240,1417 1285,1419 1301,1412 1318,1423 1333,1405 1349,1360 1365,1422 1380,1419 1400,1424 1412,1417 1429,1376 1445,1410 1461,1048 1477,1421 1493,1415 1525,1424 1542,1376 1558,1420"
];
const garbage = [
  "331,1137 524,1137 704,1136 882,1133",
  "343,1337 391,1382 615,1398 808,1434 999,1430 1127,1455 1367,1438 1463,1420",
  "86,1436 214,1360 279,1406 310,1452 455,1432 534,1363 646,1430 693,1320 726,1416 933,1434 1349,1440 1461,1345"
];
const illumination = [
  "315,1157 345,1157 435,1157 480,1158 732,1158 882,1158 1314,1158 1448,1158",
  "391,1458 487,1458 536,1458 712,1458 933,1458 999,1458 1029,1457",
  "54,1458 86,1458 166,1458 240,1458 455,1456 650,1457 965,1457 1436,1458"
];
const parse = s => s ? s.split(" ").map(p => p.split(",").map(Number)) : [];

function area(id, series) {
  const pts = series.flatMap((s, i) => parse(s).map(([x, y]) => place(blocks[i], x, y).join()));
  document.getElementById(id).setAttribute("points", ["226,538", ...pts, "1917,538"].join(" "));
}
function spikes(id, series, half) {
  const d = series.flatMap((s, i) => parse(s).map(([x, y]) => {
    const [px, py] = place(blocks[i], x, y).map(Number);
    return `M${px - half} 538L${px} ${py}L${px + half} 538z`;
  }));
  document.getElementById(id).setAttribute("d", d.join(""));
}
area("rendering", rendering);
area("scripts", scripts);
spikes("garbage", garbage, 5.6);
spikes("pathScripts", ["", "1255,885", "630,1070"], 5.8);
spikes("pathGarbage", ["", "1255,1308", "630,1392"], 5.8);
document.getElementById("illumination").setAttribute("d", illumination.flatMap((s, i) => parse(s).map(([x, y]) => {
  const [px, py] = place(blocks[i], x, y);
  return `M${px - 3} ${py}h6V537h-6z`;
})).join(""));

// depth, foldout (v open, > closed, - leaf), name, total, self, calls
const calls = [
  [0, "v", "Update.ScriptRunDelayedDynamicFrameRate", "51.9%", "0.0%", 1],
  [1, "v", "CoroutinesDelayedCalls", "51.9%", "2.1%", 1],
  [2, "v", "DeliveryManager.TakePath() [Coroutine: MoveNext]", "43.2%", "0.0%", 26],
  [3, "v", "SetupCoroutine.InvokeMoveNext()", "43.1%", "0.0%", 26],
  [4, "v", "DeliveryManager.TakePath() [Coroutine: MoveNext]", "43.0%", "0.1%", 26],
  [5, "v", "DeliveryManager.GetPathToAllStores()", "42.6%", "0.0%", 1],
  [6, "v", "ScenarioData.ShortestPath()", "41.7%", "0.0%", 2],
  [7, "v", "ScenarioData.ComputePath()", "41.6%", "1.6%", 6],
  [8, ">", "HeapPriorityQueue`1..ctor()", "13.4%", "0.0%", 6],
  [8, ">", "SearchNode.GetChildren()", "10.2%", "3.3%", 274],
  [8, ">", "HeapPriorityQueue`1.Dequeue()", "5.8%", "0.1%", 280],
  [8, ">", "HeapPriorityQueue`1.Enqueue()", "4.1%", "0.6%", 312],
  [8, ">", "HashSet`1.Contains()", "2.5%", "0.6%", 582],
  [8, ">", "HashSet`1.Add()", "1.8%", "0.1%", 312],
  [8, ">", "SearchNode.AtGoal()", "0.8%", "0.6%", 280],
  [8, ">", "Enumerator.MoveNext()", "0.3%", "0.3%", 856],
  [8, ">", "List`1.GetEnumerator()", "0.2%", "0.1%", 274],
  [8, ">", "Stack`1.Push()", "0.1%", "0.0%", 163],
  [8, "-", "Enumerator.get_Current()", "0.1%", "0.1%", 582],
  [8, "-", "HeapPriorityQueue`1.get_Count()", "0.0%", "0.0%", 280],
  [8, "-", "Enumerator.Dispose()", "0.0%", "0.0%", 274]
];
const fold = { v: "M0 0h10L5 10z", ">": "M1 0v10l9-5z", "-": "" };
document.getElementById("rows").innerHTML = calls.map(([d, f, n, t, s, c]) =>
  `<div class="row${d === 7 ? " on" : ""}"><span class="fn" style="--depth:${d}"><svg viewBox="0 0 10 10"><path d="${fold[f]}"/></svg>${n}</span><span>${t}</span><span>${s}</span><span>${c}</span></div>`
).join("");
```
